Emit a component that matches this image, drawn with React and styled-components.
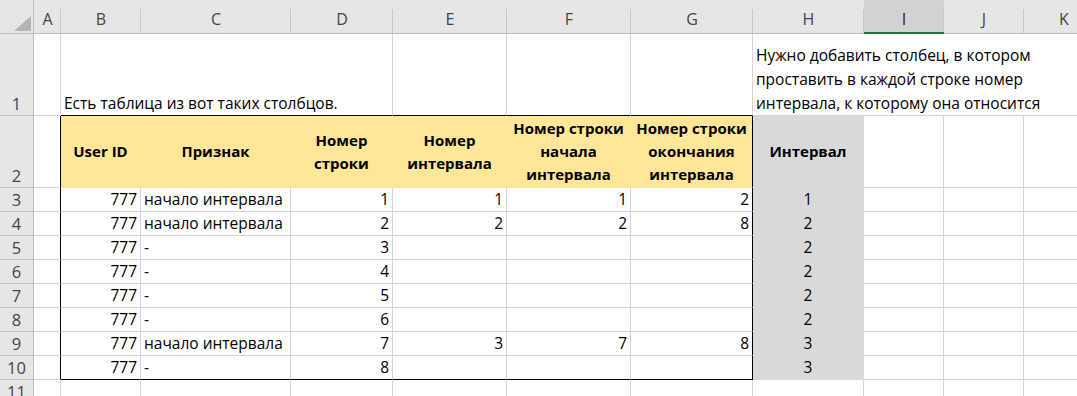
import React from 'react'
import styled, { createGlobalStyle } from 'styled-components'

const GlobalStyle = createGlobalStyle`
  body {
    margin: 0;
    overflow: hidden;
    background: #fff;
    font-family: "Open Sans", "Liberation Sans", sans-serif;
  }
`

const COLS = [
  { key: 'A', w: 27 },
  { key: 'B', w: 80 },
  { key: 'C', w: 150 },
  { key: 'D', w: 102 },
  { key: 'E', w: 114 },
  { key: 'F', w: 124 },
  { key: 'G', w: 122 },
  { key: 'H', w: 111 },
  { key: 'I', w: 80 },
  { key: 'J', w: 80 },
  { key: 'K', w: 80 },
]

const GRID = '#d4d4d4'
const FRAME = '#000'
const YELLOW = '#ffe699'
const GREY = '#d9d9d9'

const Sheet = styled.div`
  display: grid;
  grid-template-columns: 34px ${COLS.map((c) => c.w + 'px').join(' ')};
  grid-template-rows: 34px 82px 72px repeat(9, 24px);
  width: max-content;
  font-size: 15.5px;
  color: #000;
`

const Corner = styled.div`
  background: #e6e6e6;
  border-right: 1px solid #bcbcbc;
  border-bottom: 1px solid #bcbcbc;
  display: flex;
  align-items: flex-end;
  justify-content: flex-end;
  padding: 0 2px 2px 0;
`

const ColHead = styled.div`
  background:
    linear-gradient(#c6c6c6, #c6c6c6) right bottom / 1px 24px no-repeat,
    ${(p) => (p.$active ? '#d2d2d2' : '#e6e6e6')};
  border-bottom: ${(p) => (p.$active ? '2px solid #217346' : '1px solid #bcbcbc')};
  display: flex;
  align-items: flex-end;
  justify-content: center;
  padding-bottom: ${(p) => (p.$active ? '2px' : '3px')};
  color: ${(p) => (p.$active ? '#1f1f1f' : '#444')};
  font-size: 16px;
  line-height: 22px;
`

const RowHead = styled.div`
  background: #e6e6e6;
  border-right: 1px solid #bcbcbc;
  border-bottom: 1px solid #c6c6c6;
  display: flex;
  align-items: flex-end;
  justify-content: center;
  color: #444;
  font-size: 16.5px;
  line-height: 23px;
`

const Cell = styled.div`
  grid-column: ${(p) => (p.$span ? `span ${p.$span}` : 'auto')};
  background: ${(p) => p.$fill || '#fff'};
  border-right: 1px solid ${(p) => p.$rb || GRID};
  border-bottom: 1px solid ${(p) => p.$bb || GRID};
  display: flex;
  align-items: ${(p) => p.$valign || 'flex-end'};
  justify-content: ${(p) =>
    p.$align === 'right' ? 'flex-end' : p.$align === 'center' ? 'center' : 'flex-start'};
  text-align: ${(p) => p.$align || 'left'};
  padding: 0 3px;
  line-height: 23px;
  white-space: nowrap;
  overflow: hidden;
`

const Note = styled.div`
  line-height: 24px;
`

const HeadText = styled.div`
  font-weight: 700;
  font-size: 15px;
  line-height: 23px;
  text-align: center;
  width: 100%;
`

const CornerTriangle = () => (
  <svg width="17" height="15" viewBox="0 0 17 15">
    <polygon points="17,0 17,15 0,15" fill="#b4b4b4" />
  </svg>
)

const HEADERS = [
  ['User ID'],
  ['Признак'],
  ['Номер', 'строки'],
  ['Номер', 'интервала'],
  ['Номер строки', 'начала', 'интервала'],
  ['Номер строки', 'окончания', 'интервала'],
]

const ROWS = [
  { sign: 'начало интервала', row: 1, num: 1, start: 1, end: 2, interval: 1 },
  { sign: 'начало интервала', row: 2, num: 2, start: 2, end: 8, interval: 2 },
  { sign: '-', row: 3, interval: 2 },
  { sign: '-', row: 4, interval: 2 },
  { sign: '-', row: 5, interval: 2 },
  { sign: '-', row: 6, interval: 2 },
  { sign: 'начало интервала', row: 7, num: 3, start: 7, end: 8, interval: 3 },
  { sign: '-', row: 8, interval: 3 },
]

export default function App() {
  return (
    <>
      <GlobalStyle />
      <Sheet>
        <Corner>
          <CornerTriangle />
        </Corner>
        {COLS.map((c) => (
          <ColHead key={c.key} $active={c.key === 'I'}>
            {c.key}
          </ColHead>
        ))}

        {/* row 1: captions above the table */}
        <RowHead>1</RowHead>
        <Cell />
        <Cell $span={3} $bb={FRAME}>
          <Note>Есть таблица из вот таких столбцов.</Note>
        </Cell>
        <Cell $bb={FRAME} />
        <Cell $bb={FRAME} />
        <Cell $bb={FRAME} />
        <Cell $span={4} $rb="transparent">
          <Note>
            Нужно добавить столбец, в котором
            <br />
            проставить в каждой строке номер
            <br />
            интервала, к которому она относится
          </Note>
        </Cell>

        {/* row 2: table header */}
        <RowHead>2</RowHead>
        <Cell $rb={FRAME} />
        {HEADERS.map((lines, i) => (
          <Cell
            key={i}
            $fill={YELLOW}
            $bb={YELLOW}
            $rb={i === HEADERS.length - 1 ? FRAME : YELLOW}
            $valign="center"
          >
            <HeadText>
              {lines.map((l, j) => (
                <div key={j}>{l}</div>
              ))}
            </HeadText>
          </Cell>
        ))}
        <Cell $fill={GREY} $bb={GREY} $rb={GREY} $valign="center">
          <HeadText>Интервал</HeadText>
        </Cell>
        <Cell />
        <Cell />
        <Cell />

        {ROWS.map((r, i) => {
          const last = i === ROWS.length - 1
          const bb = last ? FRAME : GRID
          return (
            <React.Fragment key={r.row}>
              <RowHead>{i + 3}</RowHead>
              <Cell $rb={FRAME} />
              <Cell $align="right" $bb={bb}>777</Cell>
              <Cell $bb={bb}>{r.sign}</Cell>
              <Cell $align="right" $bb={bb}>{r.row}</Cell>
              <Cell $align="right" $bb={bb}>{r.num}</Cell>
              <Cell $align="right" $bb={bb}>{r.start}</Cell>
              <Cell $align="right" $bb={bb} $rb={FRAME}>{r.end}</Cell>
              <Cell $align="center" $fill={GREY} $bb={GREY} $rb={GREY}>
                {r.interval}
              </Cell>
              <Cell />
              <Cell />
              <Cell />
            </React.Fragment>
          )
        })}

        <RowHead>11</RowHead>
        {COLS.map((c) => (
          <Cell key={c.key} />
        ))}
      </Sheet>
    </>
  )
}
